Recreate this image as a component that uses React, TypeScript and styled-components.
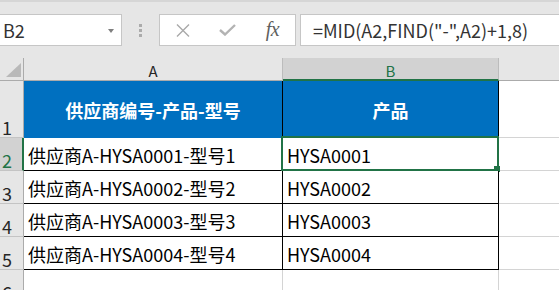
import React from "react";
import styled, { createGlobalStyle } from "styled-components";

const Global = createGlobalStyle`
  html, body { margin: 0; padding: 0; background: #ffffff; }
  body { font-family: "Noto Sans CJK SC", "Liberation Sans", sans-serif; overflow: hidden; }
  * { box-sizing: border-box; }
`;

const FONT = `"Noto Sans CJK SC", "Liberation Sans", sans-serif`;

const Page = styled.div`
  width: 559px;
  height: 290px;
  overflow: hidden;
  background: #ffffff;
  display: flex;
  flex-direction: column;
`;

const Toolbar = styled.div`
  flex: none;
  height: 58px;
  background: #e6e6e6;
  border-top: 2px solid #d6d6d6;
  display: flex;
  align-items: flex-start;
  padding-top: 12px;
`;

const NameBox = styled.div`
  width: 123px;
  height: 32px;
  margin-left: -1px;
  background: #ffffff;
  border: 1px solid #c6c6c6;
  display: flex;
  align-items: center;
  justify-content: space-between;
  padding: 0 7px 0 3px;
  font-family: ${FONT};
  font-size: 18px;
  color: #333333;
`;

const Caret = styled.span`
  width: 0;
  height: 0;
  border-left: 3.5px solid transparent;
  border-right: 3.5px solid transparent;
  border-top: 4px solid #7f7f7f;
  margin-top: 1px;
`;

const Grip = styled.div`
  width: 37px;
  height: 32px;
  display: flex;
  flex-direction: column;
  align-items: center;
  justify-content: center;
  gap: 2px;
`;

const GripDot = styled.span`
  width: 3px;
  height: 3px;
  background: #ababab;
`;

const FxBox = styled.div`
  width: 137px;
  height: 32px;
  background: #ffffff;
  border: 1px solid #c6c6c6;
  display: flex;
  align-items: center;
  padding-left: 0;
`;

const FxSlot = styled.div`
  width: 45px;
  height: 30px;
  display: flex;
  align-items: center;
  justify-content: center;
`;

const FxLabel = styled.span`
  font-family: "Liberation Serif", serif;
  font-style: italic;
  font-size: 20px;
  color: #5f5f5f;
  letter-spacing: -0.5px;
  margin-top: -1px;
`;

const FormulaBox = styled.div`
  flex: 1;
  height: 32px;
  margin-left: 4px;
  margin-right: -2px;
  background: #ffffff;
  border: 1px solid #c6c6c6;
  display: flex;
  align-items: center;
  padding-left: 12px;
  font-family: ${FONT};
  font-size: 18px;
  color: #333333;
  white-space: pre;
`;

const Sheet = styled.div`
  display: grid;
  grid-template-columns: 24px 259px 216px 1fr;
  grid-template-rows: 23px 57px repeat(5, 33px);
`;

const Corner = styled.div`
  background: #e6e6e6;
  border-right: 1px solid #ababab;
  border-bottom: 1px solid #ababab;
  display: flex;
  align-items: flex-end;
  justify-content: flex-end;
  padding: 0 2px 3px 0;
`;

const ColHead = styled.div<{ $selected?: boolean }>`
  background: ${(p) => (p.$selected ? "#d2d2d2" : "#e6e6e6")};
  border-bottom: ${(p) => (p.$selected ? "2px solid #217346" : "1px solid #ababab")};
  border-right: 1px solid #bcbcbc;
  display: flex;
  align-items: center;
  justify-content: center;
  padding-top: 3px;
  font-family: ${FONT};
  font-size: 15px;
  color: ${(p) => (p.$selected ? "#217346" : "#262626")};
`;

const ColHeadEmpty = styled.div`
  background: #e6e6e6;
  border-bottom: 1px solid #ababab;
`;

const RowHead = styled.div<{ $selected?: boolean }>`
  background: ${(p) => (p.$selected ? "#d2d2d2" : "#e6e6e6")};
  border-right: ${(p) => (p.$selected ? "2px solid #217346" : "1px solid #ababab")};
  border-bottom: 1px solid #c4c4c4;
  display: flex;
  align-items: flex-end;
  padding: 0 0 0 2px;
  font-family: ${FONT};
  font-size: 18px;
  line-height: 20px;
  color: ${(p) => (p.$selected ? "#217346" : "#262626")};
`;

const HeadCell = styled.div`
  background: #0070c0;
  border-right: 1px solid #000000;
  display: flex;
  align-items: center;
  justify-content: center;
  font-family: ${FONT};
  font-weight: 700;
  font-size: 18px;
  color: #ffffff;
  white-space: nowrap;
`;

const Cell = styled.div<{ $grid?: boolean }>`
  position: relative;
  background: #ffffff;
  border-right: 1px solid ${(p) => (p.$grid ? "#d4d4d4" : "#000000")};
  border-bottom: 1px solid ${(p) => (p.$grid ? "#d4d4d4" : "#000000")};
  display: flex;
  align-items: flex-end;
  padding: 0 0 5px 4px;
  font-family: ${FONT};
  font-size: 18px;
  line-height: 20px;
  color: #000000;
  white-space: nowrap;
`;

const BlankCell = styled.div<{ $blue?: boolean }>`
  background: #ffffff;
  border-bottom: 1px solid #d4d4d4;
`;

const Selection = styled.div`
  position: absolute;
  left: -2px;
  top: -2px;
  right: -1px;
  bottom: -1px;
  border: 2px solid #217346;
  pointer-events: none;
`;

const FillHandle = styled.div`
  position: absolute;
  right: -3px;
  bottom: -3px;
  width: 6px;
  height: 6px;
  background: #217346;
`;

const rows = [
  { n: 2, a: "供应商A-HYSA0001-型号1", b: "HYSA0001" },
  { n: 3, a: "供应商A-HYSA0002-型号2", b: "HYSA0002" },
  { n: 4, a: "供应商A-HYSA0003-型号3", b: "HYSA0003" },
  { n: 5, a: "供应商A-HYSA0004-型号4", b: "HYSA0004" },
];

export default function App() {
  return (
    <Page>
      <Global />
      <Toolbar>
        <NameBox>
          <span>B2</span>
          <Caret />
        </NameBox>
        <Grip>
          <GripDot />
          <GripDot />
          <GripDot />
        </Grip>
        <FxBox>
          <FxSlot>
            <svg width="14" height="13" viewBox="0 0 14 13">
              <path d="M1 0.5 L13 12.5 M13 0.5 L1 12.5" stroke="#a9a9a9" strokeWidth="1.4" fill="none" />
            </svg>
          </FxSlot>
          <FxSlot>
            <svg width="17" height="12" viewBox="0 0 17 12">
              <path d="M1 6 L6 10.5 L16 1" stroke="#b3b3b3" strokeWidth="2.4" fill="none" />
            </svg>
          </FxSlot>
          <FxSlot>
            <FxLabel>fx</FxLabel>
          </FxSlot>
        </FxBox>
        <FormulaBox>{'=MID(A2,FIND("-",A2)+1,8)'}</FormulaBox>
      </Toolbar>
      <Sheet>
        <Corner>
          <svg width="15" height="14" viewBox="0 0 15 14">
            <polygon points="15,0 15,14 0,14" fill="#b9b9b9" />
          </svg>
        </Corner>
        <ColHead>A</ColHead>
        <ColHead $selected>B</ColHead>
        <ColHeadEmpty />

        <RowHead>1</RowHead>
        <HeadCell>供应商编号-产品-型号</HeadCell>
        <HeadCell>产品</HeadCell>
        <BlankCell />

        {rows.map((r) => (
          <React.Fragment key={r.n}>
            <RowHead $selected={r.n === 2}>{r.n}</RowHead>
            <Cell>{r.a}</Cell>
            <Cell>
              {r.b}
              {r.n === 2 && (
                <Selection>
                  <FillHandle />
                </Selection>
              )}
            </Cell>
            <BlankCell />
          </React.Fragment>
        ))}

        <RowHead>6</RowHead>
        <Cell $grid />
        <Cell $grid />
        <BlankCell />
      </Sheet>
    </Page>
  );
}
